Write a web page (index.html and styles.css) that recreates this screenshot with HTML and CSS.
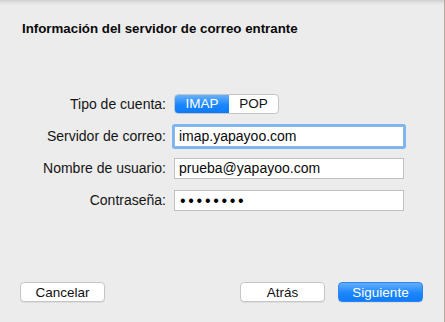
FILE: index.html
```html
<!DOCTYPE html>
<html lang="es">
<head>
    <meta charset="UTF-8">
    <title>Información del servidor de correo entrante</title>
    <link rel="stylesheet" href="styles.css">
</head>
<body>
    <div class="sheet">
        <h1 class="title">Información del servidor de correo entrante</h1>

        <div class="form">
            <label class="label">Tipo de cuenta:</label>
            <div class="control">
                <div class="segmented">
                    <span class="seg seg-on">IMAP</span>
                    <span class="seg">POP</span>
                </div>
            </div>

            <label class="label">Servidor de correo:</label>
            <div class="control">
                <div class="field focused">imap.yapayoo.com</div>
            </div>

            <label class="label">Nombre de usuario:</label>
            <div class="control">
                <div class="field">prueba@yapayoo.com</div>
            </div>

            <label class="label">Contraseña:</label>
            <div class="control">
                <div class="field password">••••••••</div>
            </div>
        </div>

        <div class="footer">
            <button class="btn">Cancelar</button>
            <div class="spacer"></div>
            <button class="btn">Atrás</button>
            <button class="btn btn-primary">Siguiente</button>
        </div>
    </div>
</body>
</html>
```

FILE: styles.css
```css
html, body {
    margin: 0;
    padding: 0;
}

body {
    width: 445px;
    height: 322px;
    overflow: hidden;
    background: #ececec;
    font-family: "Liberation Sans", Arial, sans-serif;
    font-size: 14px;
    color: #111;
}

.sheet {
    box-sizing: border-box;
    height: 322px;
    display: flex;
    flex-direction: column;
    background: linear-gradient(#cfcfcf, #e4e4e4 3px, #ececec 6px);
    border-right: 1px solid #b5a99d;
}

.title {
    margin: 21px 0 0 22px;
    font-size: 13.3px;
    line-height: 16px;
    font-weight: bold;
    color: #0a0a0a;
}

.form {
    display: grid;
    grid-template-columns: 166px 230px;
    column-gap: 8px;
    row-gap: 10px;
    margin-top: 56px;
}

.label {
    height: 22px;
    line-height: 22px;
    text-align: right;
    color: #141414;
}

.control {
    height: 22px;
    display: flex;
    align-items: center;
}

.segmented {
    display: flex;
    height: 20px;
    border: 1px solid #c4c4c4;
    border-radius: 4px;
    background: #fff;
    overflow: hidden;
    box-sizing: border-box;
}

.seg {
    width: 54px;
    line-height: 18px;
    text-align: center;
    font-size: 13.5px;
    color: #111;
}

.seg + .seg {
    width: 49px;
}

.seg-on {
    color: #fff;
    background: linear-gradient(#68b1fa, #1a86fc 55%, #0c7bf8);
}

.field {
    box-sizing: border-box;
    width: 230px;
    height: 21px;
    padding: 0 4px;
    line-height: 19px;
    background: #fff;
    border: 1px solid #c0c0c0;
    color: #0a0a0a;
    white-space: nowrap;
}

.focused {
    border-color: #8fb6dc;
    box-shadow: 0 0 0 2px #7ab6f3;
    border-radius: 1px;
}

.password {
    font-size: 16px;
    letter-spacing: 2.7px;
    padding-left: 5px;
    color: #000;
}

.footer {
    margin-top: auto;
    margin-bottom: 20px;
    display: flex;
    padding: 0 21px 0 20px;
    gap: 13px;
}

.spacer {
    flex: 1;
}

.btn {
    box-sizing: border-box;
    width: 85px;
    height: 20px;
    padding: 0;
    font-family: "Liberation Sans", Arial, sans-serif;
    font-size: 13.5px;
    color: #111;
    background: #fff;
    border: 1px solid #c6c6c6;
    border-radius: 4px;
    box-shadow: 0 1px 0 rgba(0, 0, 0, 0.06);
}

.btn-primary {
    color: #fff;
    border-color: #2d84f5;
    background: linear-gradient(#64aefb, #1d87fb 55%, #0f7cf8);
}
```
